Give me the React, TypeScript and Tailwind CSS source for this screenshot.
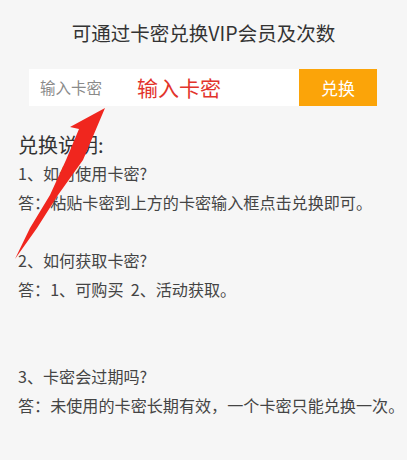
const faq = [
  { q: "1、如何使用卡密?", a: "答：粘贴卡密到上方的卡密输入框点击兑换即可。", gap: 1 },
  { q: "2、如何获取卡密?", a: "答：1、可购买  2、活动获取。", gap: 2 },
  { q: "3、卡密会过期吗?", a: "答：未使用的卡密长期有效，一个卡密只能兑换一次。", gap: 0 },
];

const RedArrow = () => (
  <svg
    className="absolute left-0 top-0 pointer-events-none"
    width="407"
    height="460"
    viewBox="0 0 407 460"
  >
    <path
      d="M105 108 L70 127 L79 129 L66 160 L50 195 L30 228 L15 259 L37 228 L58 195 L83 160 Z"
      fill="#f0261e"
    />
  </svg>
);

export default function App() {
  return (
    <div
      className="relative w-full h-[460px] bg-[#f6f6f6] overflow-hidden text-[#333]"
      style={{ fontFamily: '"Noto Sans CJK SC", "Noto Sans", sans-serif' }}
    >
      <h1 className="pt-[20px] text-center text-[19.5px] leading-[26px] text-[#333]">
        可通过卡密兑换VIP会员及次数
      </h1>

      <div className="mt-[23px] ml-[29px] flex h-[37px] w-[348px]">
        <div className="flex flex-1 items-center bg-white pl-[11px]">
          <span className="text-[15.5px] text-[#8a8a8a]">输入卡密</span>
          <span className="ml-[35px] text-[21px] text-[#e2332b]">输入卡密</span>
        </div>
        <button className="flex w-[78px] items-center justify-center bg-[#fba409] text-[17px] text-white">
          兑换
        </button>
      </div>

      <div className="mt-[24px] px-[18px]">
        <div className="text-[20px] leading-[29px] text-[#333]">兑换说明:</div>
        {faq.map((item) => (
          <div key={item.q} className="text-[16.1px] leading-[29px] text-[#444]">
            <p>{item.q}</p>
            <p className="whitespace-pre">{item.a}</p>
            {item.gap > 0 && <div style={{ height: item.gap * 29 }} />}
          </div>
        ))}
      </div>

      <RedArrow />
    </div>
  );
}
